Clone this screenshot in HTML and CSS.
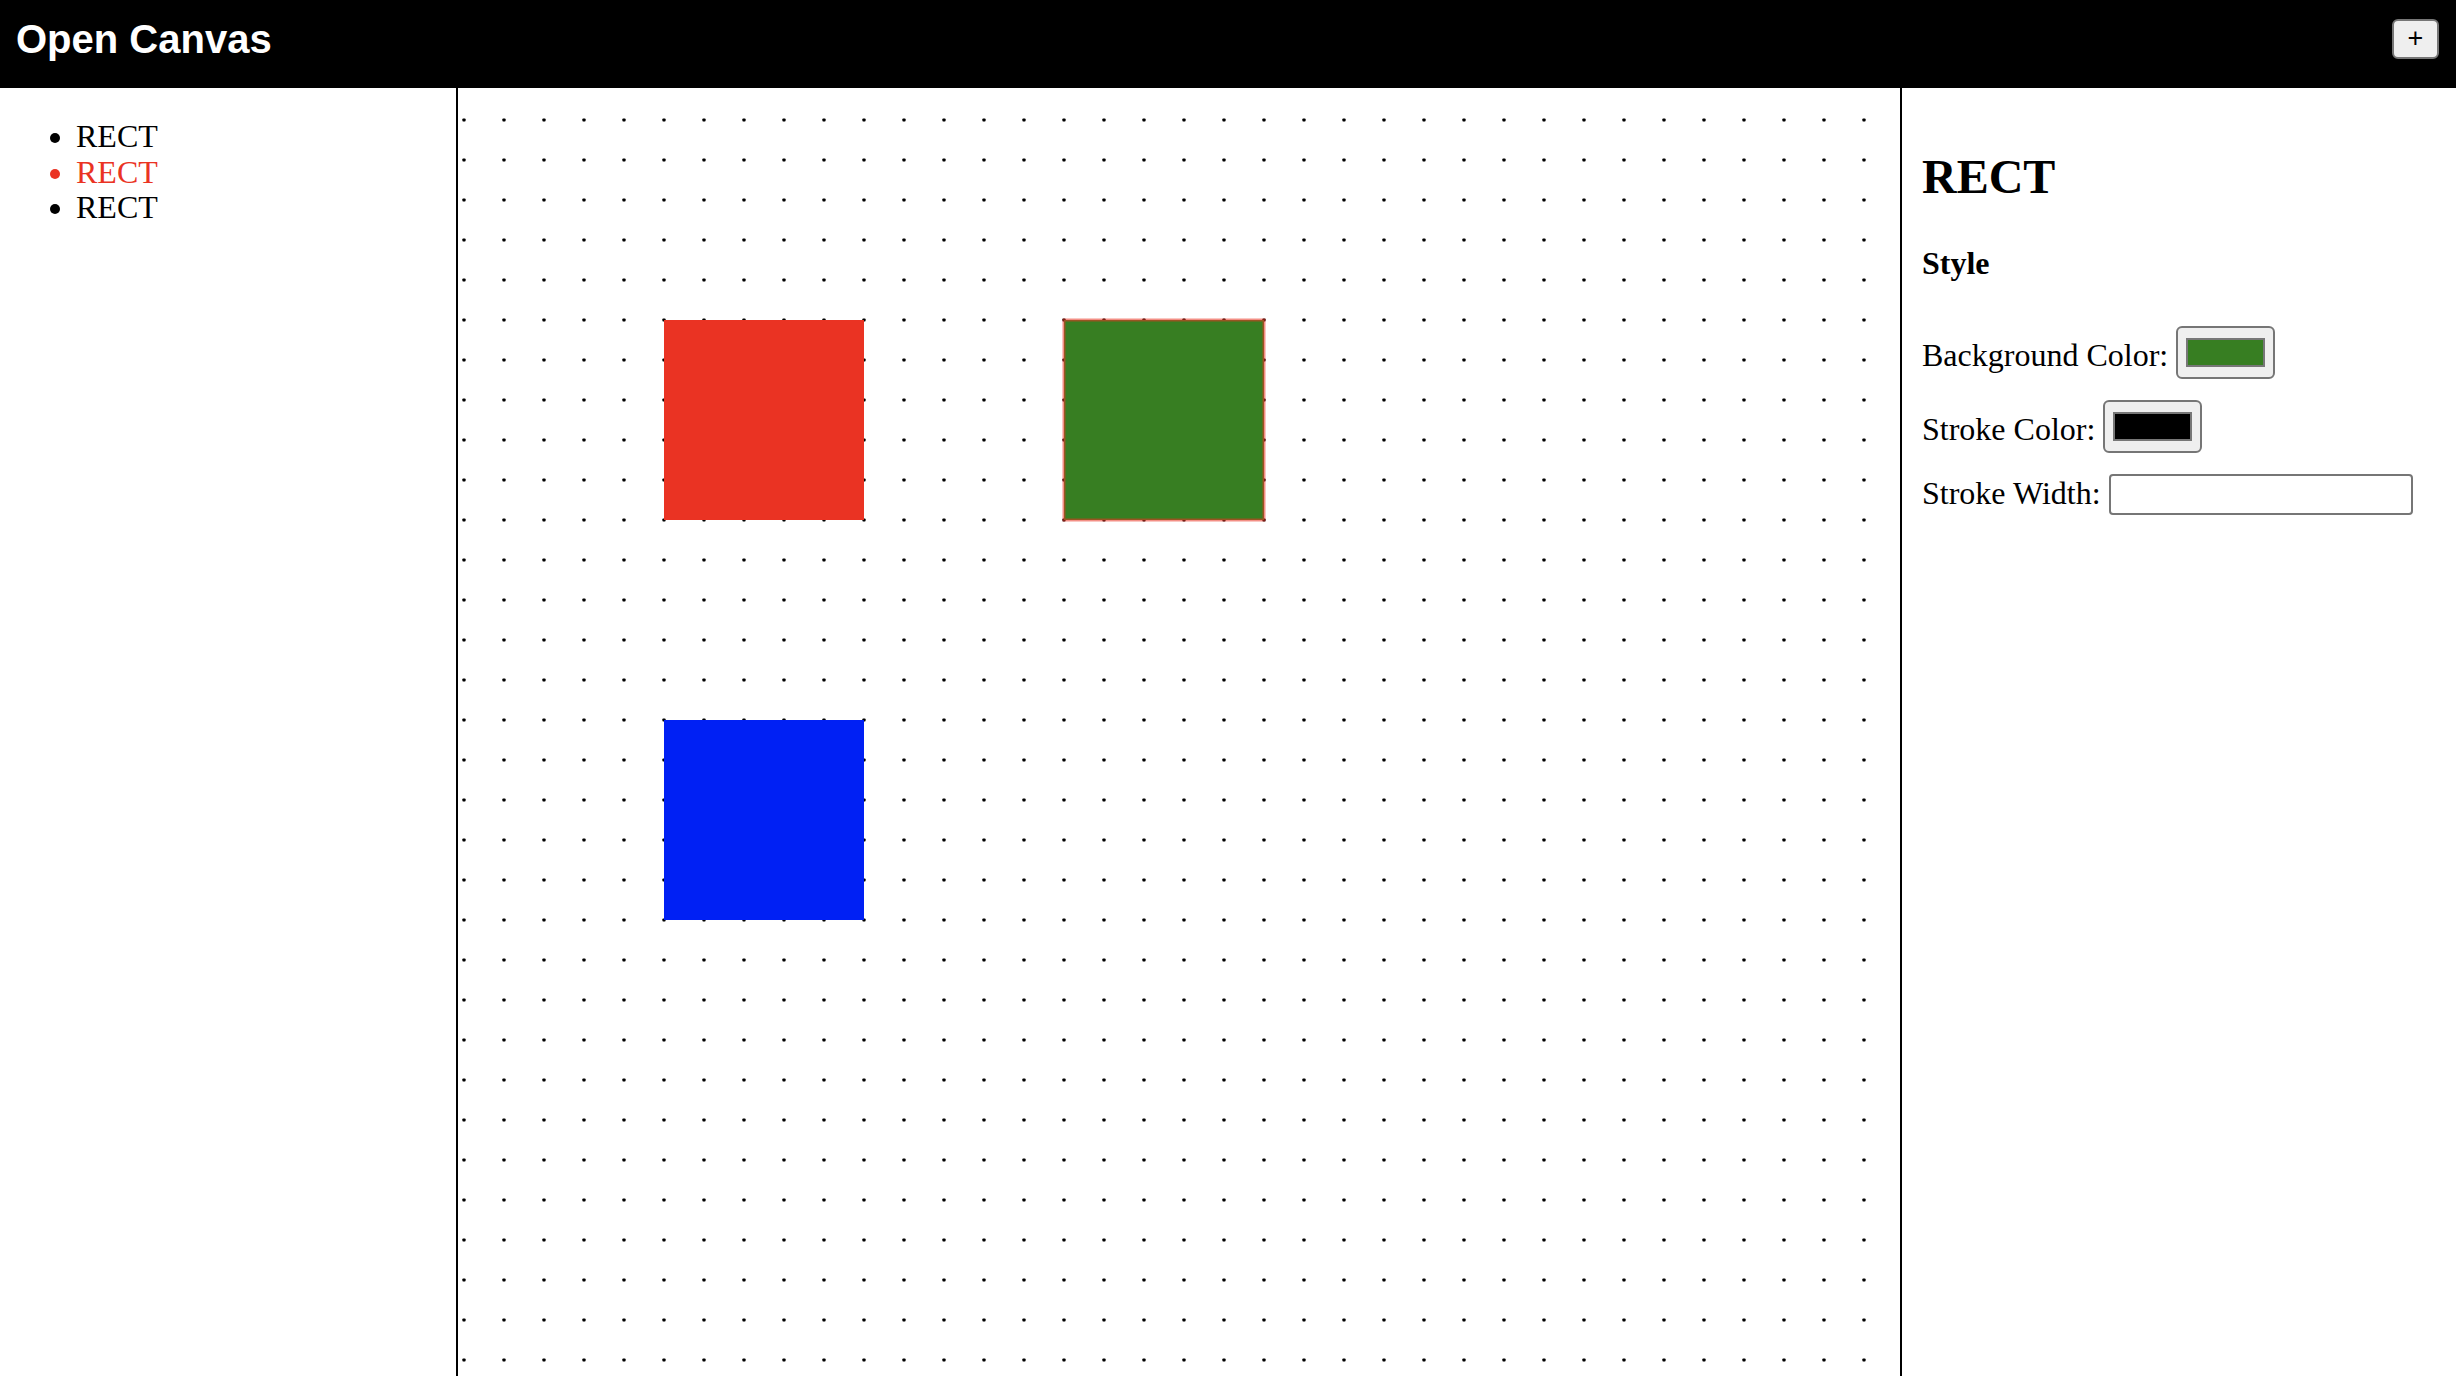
FILE: index.html
```html
<!DOCTYPE html>
<html lang="en">
<head>
<meta charset="utf-8">
<title>Open Canvas</title>
<link rel="stylesheet" href="styles.css">
</head>
<body>
<header class="topbar">
  <div class="brand">Open Canvas</div>
  <button class="add-btn" type="button">+</button>
</header>
<main class="workspace">
  <aside class="layers">
    <ul class="layer-list">
      <li class="layer">RECT</li>
      <li class="layer layer-active">RECT</li>
      <li class="layer">RECT</li>
    </ul>
  </aside>
  <section class="canvas">
    <svg class="canvas-svg" width="100%" height="100%" xmlns="http://www.w3.org/2000/svg">
      <defs>
        <pattern id="dots" x="-14" y="12" width="40" height="40" patternUnits="userSpaceOnUse">
          <rect x="18.4" y="18.4" width="3.2" height="3.2" rx="0.8" fill="#000"/>
        </pattern>
      </defs>
      <rect x="0" y="0" width="100%" height="100%" fill="#fff"/>
      <rect x="0" y="0" width="100%" height="100%" fill="url(#dots)"/>
      <rect x="206" y="232" width="200" height="200" fill="#ea3323"/>
      <rect x="606" y="232" width="200" height="200" fill="#377e22" stroke="rgba(234,51,35,0.55)" stroke-width="3"/>
      <rect x="206" y="632" width="200" height="200" fill="#0020f4"/>
    </svg>
  </section>
  <aside class="inspector">
    <h2 class="insp-title">RECT</h2>
    <h4 class="insp-section">Style</h4>
    <div class="field">
      <label class="field-label field-label-color" for="bg">Background Color:</label>
      <input class="color-input" id="bg" type="color" value="#377e22">
    </div>
    <div class="field">
      <label class="field-label field-label-color" for="sc">Stroke Color:</label>
      <input class="color-input" id="sc" type="color" value="#000000">
    </div>
    <div class="field">
      <label class="field-label field-label-text" for="sw">Stroke Width:</label>
      <input class="text-input" id="sw" type="text">
    </div>
  </aside>
</main>
</body>
</html>
```

FILE: styles.css
```css
html, body {
  margin: 0;
  padding: 0;
  background: #fff;
}

body {
  font-family: "Liberation Serif", "Times New Roman", serif;
  font-size: 32px;
  line-height: 1.107;
  color: #000;
  width: 2456px;
  height: 1376px;
  overflow: hidden;
  display: flex;
  flex-direction: column;
}

.topbar {
  height: 88px;
  box-sizing: border-box;
  background: #000;
  display: flex;
  justify-content: space-between;
  align-items: flex-start;
  padding: 16px 17px 0 16px;
  flex: none;
}

.brand {
  font-family: "Liberation Sans", Arial, sans-serif;
  font-weight: bold;
  font-size: 40px;
  line-height: 46px;
  color: #fff;
}

.add-btn {
  margin-top: 3px;
  width: 47px;
  height: 40px;
  box-sizing: border-box;
  background: #efefef;
  border: 2px solid #767676;
  border-radius: 6px;
  font-family: "Liberation Sans", Arial, sans-serif;
  font-size: 27px;
  line-height: 1;
  color: #000;
  padding: 0 0 2px 0;
  display: flex;
  align-items: center;
  justify-content: center;
}

.workspace {
  flex: 1;
  display: flex;
  min-height: 0;
}

.layers {
  width: 456px;
  flex: none;
}

.layer-list {
  margin: 31px 0;
  padding-left: 76px;
  list-style: disc;
}

.layer {
  line-height: 35.7px;
}

.layer-active {
  color: #ea3323;
}

.canvas {
  flex: 1;
  border-left: 2px solid #000;
  border-right: 2px solid #000;
  min-width: 0;
  overflow: hidden;
}

.canvas-svg {
  display: block;
}

.inspector {
  width: 554px;
  flex: none;
  box-sizing: border-box;
  padding: 22px 20px 20px 20px;
}

.insp-title {
  font-size: 48px;
  font-weight: bold;
  margin: 39.84px 0;
}

.insp-section {
  font-size: 32px;
  font-weight: bold;
  margin: 42.56px 0 45.5px 0;
}

.field {
  display: flex;
  align-items: flex-start;
  gap: 8px;
  margin-bottom: 21px;
}

.field-label {
  font-size: 32px;
}

.field-label-color {
  margin-top: 12px;
}

.field-label-text {
  margin-top: 2px;
}

.color-input {
  -webkit-appearance: none;
  appearance: none;
  width: 99px;
  height: 53px;
  box-sizing: border-box;
  margin: 0;
  padding: 0;
  border: 2px solid #767676;
  border-radius: 6px;
  background: #efefef;
}

.color-input::-webkit-color-swatch-wrapper {
  padding: 10px 8px;
}

.color-input::-webkit-color-swatch {
  border: 2px solid #777;
  border-radius: 0;
}

.text-input {
  width: 304px;
  height: 41px;
  box-sizing: border-box;
  margin: 0;
  border: 2px solid #767676;
  border-radius: 4px;
  background: #fff;
  padding: 2px 4px;
  font-size: 26px;
}
```
